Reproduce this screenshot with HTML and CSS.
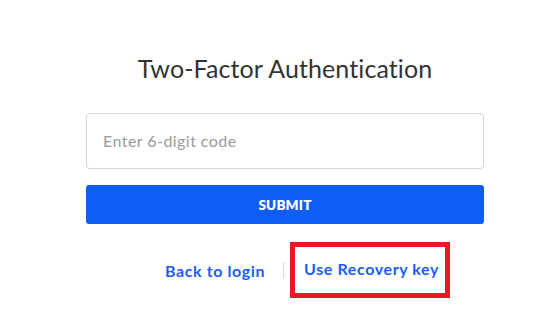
FILE: index.html
```html
<!DOCTYPE html>
<html>
<head>
<meta charset="utf-8">
<link rel="stylesheet" href="styles.css">
</head>
<body>
<div class="page">
  <div class="card">
    <h1 class="title">Two-Factor Authentication</h1>
    <input class="code-input" type="text" placeholder="Enter 6-digit code">
    <button class="submit">SUBMIT</button>
    <div class="links">
      <a class="link" href="#">Back to login</a>
      <span class="divider"></span>
      <span class="highlight"><a class="link" href="#">Use Recovery key</a></span>
    </div>
  </div>
</div>
</body>
</html>
```
FILE: styles.css
```css
html, body {
  margin: 0;
  padding: 0;
  background: #ffffff;
  font-family: "Lato", "Open Sans", sans-serif;
}
.page {
  padding: 0 0 0 86px;
}
.card {
  width: 398px;
  display: flex;
  flex-direction: column;
}
.title {
  margin: 53px 0 0 0;
  height: 30px;
  line-height: 30px;
  font-size: 25px;
  font-weight: 400;
  color: #333333;
  text-align: center;
  letter-spacing: 0.1px;
}
.code-input {
  margin-top: 30px;
  box-sizing: border-box;
  width: 398px;
  height: 56px;
  border: 1px solid #d6d6d6;
  border-radius: 4px;
  padding: 0 16px 2px 16px;
  font-family: inherit;
  font-size: 16px;
  letter-spacing: 0.45px;
  color: #333;
  outline: none;
}
.code-input::placeholder {
  color: #9a9a9a;
}
.submit {
  margin-top: 16px;
  box-sizing: border-box;
  width: 398px;
  height: 39px;
  border: none;
  border-radius: 3px;
  background: #0d5ef5;
  color: #ffffff;
  font-family: inherit;
  font-weight: 800;
  font-size: 13.5px;
  letter-spacing: 0.2px;
}
.links {
  margin-top: 18px;
  display: flex;
  align-items: center;
  padding-left: 79px;
}
.link {
  color: #1a5ef0;
  font-weight: 700;
  font-size: 16px;
  letter-spacing: 0.6px;
  text-decoration: none;
}
.divider {
  width: 1px;
  height: 16px;
  background: #dcdcdc;
  margin: 0 6px 0 18px;
}
.highlight {
  box-sizing: border-box;
  height: 56px;
  border: 5px solid #e21b25;
  padding: 0 6px 3px 9px;
  display: flex;
  align-items: center;
}
```
